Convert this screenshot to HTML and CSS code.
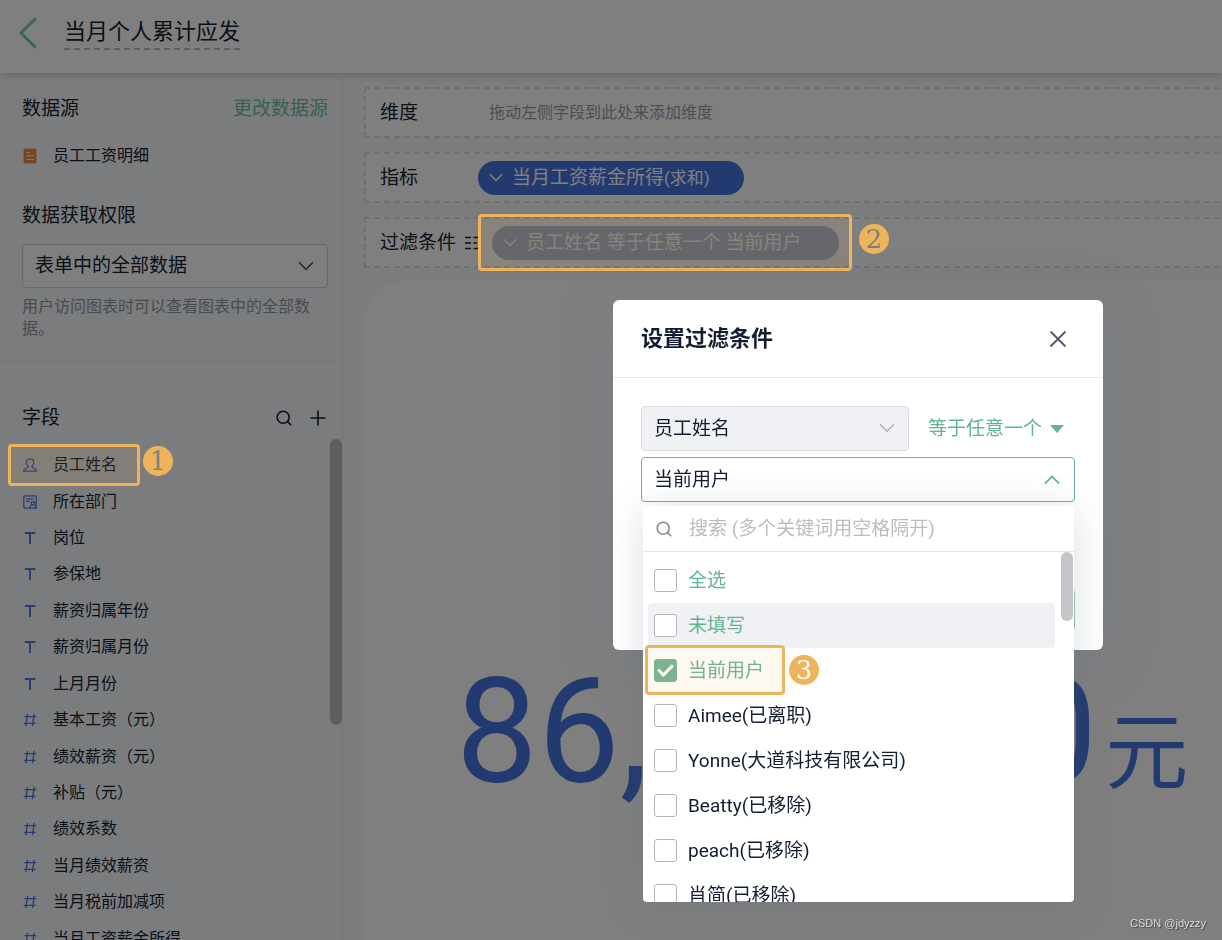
FILE: index.html
```html
<!DOCTYPE html>
<html lang="zh-CN">
<head>
<meta charset="utf-8">
<meta name="viewport" content="width=device-width, initial-scale=1">
<title>当月个人累计应发</title>
<link rel="stylesheet" href="styles.css">
</head>
<body>
<svg class="sprite" aria-hidden="true">
  <symbol id="i-text" viewBox="0 0 14 14"><path d="M1.800 2h10.400M7 2V13" stroke-width="1.900"/></symbol>
  <symbol id="i-num" viewBox="0 0 14 14"><path d="M1.400 3.600H13.400M.6 10.400H12.600M4.600.8 2.800 13.200M11.200.8 9.400 13.200" stroke-width="1.300"/></symbol>
  <symbol id="i-down" viewBox="0 0 16 10"><path d="M1 1.200 8 8.400 15 1.200"/></symbol>
  <symbol id="i-search" viewBox="0 0 16 16"><circle cx="7.200" cy="7.200" r="6"/><path d="M11.600 11.600 15.200 15.200"/></symbol>
</svg>

<div class="page">
  <header class="topbar">
    <button class="back" type="button" aria-label="返回"><svg viewBox="0 0 20 32"><path d="M17 2 3 16 17 30"/></svg></button>
    <h1 class="title">当月个人累计应发</h1>
  </header>

  <div class="workspace">
    <aside class="sidebar">
      <section class="source">
        <div class="section-head">
          <h2>数据源</h2>
          <a class="link" href="#source">更改数据源</a>
        </div>
        <p class="source-name">
          <svg class="form-icon" viewBox="0 0 14 15"><rect x="1" y=".5" width="12" height="14" rx="1.200"/><path d="M3.400 4.200h3.400M3.400 7.400h7.200M3.400 10.800h7.200"/></svg>
          员工工资明细
        </p>
        <h2><label for="scope">数据获取权限</label></h2>
        <div class="select-wrap scope-wrap">
          <select id="scope" class="select"><option>表单中的全部数据</option></select>
          <svg class="chev"><use href="#i-down"/></svg>
        </div>
        <p class="hint">用户访问图表时可以查看图表中的全部数据。</p>
      </section>

      <section class="fields">
        <div class="section-head">
          <h2>字段</h2>
          <div class="tools">
            <button type="button" aria-label="搜索字段"><svg viewBox="0 0 16 16"><use href="#i-search"/></svg></button>
            <button type="button" aria-label="添加字段"><svg viewBox="0 0 16 16"><path d="M8 .5v15M.5 8h15"/></svg></button>
          </div>
        </div>
        <ul class="field-list">
          <li><svg viewBox="0 0 14 14"><path d="M5.200 8.200C3.600 6.800 3.200 5.400 3.200 4.200 3.200 2 4.800.8 7 .8s3.800 1.200 3.800 3.400c0 1.200-.4 2.600-2 4 0 1.600 1.200 2 2.800 2.400 1.200.4 1.800 1.200 1.800 2.600H.6c0-1.400.6-2.200 1.800-2.600 1.600-.4 2.800-.8 2.800-2.400Z" stroke-width="1.200"/></svg>员工姓名<span class="marker marker-field"><b class="badge">1</b></span></li>
          <li><svg viewBox="0 0 14 14"><path d="M5.500 13.200H2.200A1.400 1.400 0 0 1 .8 11.800V2.200A1.400 1.400 0 0 1 2.200.8h9.600a1.400 1.400 0 0 1 1.400 1.400V13.200H6.600c0-1.600.8-2.400 1.800-2.700M3.300 3.800h7.400M3.300 6.400h3.400" stroke-width="1.300"/><path d="M11.400 10.500c1 .3 1.600 1.100 1.600 2.400" stroke-width="1.300"/><circle cx="9.900" cy="8.300" r="1.700" stroke-width="1.300"/></svg>所在部门</li>
          <li><svg><use href="#i-text"/></svg>岗位</li>
          <li><svg><use href="#i-text"/></svg>参保地</li>
          <li><svg><use href="#i-text"/></svg>薪资归属年份</li>
          <li><svg><use href="#i-text"/></svg>薪资归属月份</li>
          <li><svg><use href="#i-text"/></svg>上月月份</li>
          <li><svg><use href="#i-num"/></svg>基本工资（元）</li>
          <li><svg><use href="#i-num"/></svg>绩效薪资（元）</li>
          <li><svg><use href="#i-num"/></svg>补贴（元）</li>
          <li><svg><use href="#i-num"/></svg>绩效系数</li>
          <li><svg><use href="#i-num"/></svg>当月绩效薪资</li>
          <li><svg><use href="#i-num"/></svg>当月税前加减项</li>
          <li><svg><use href="#i-num"/></svg>当月工资薪金所得</li>
        </ul>
        <span class="side-thumb"></span>
      </section>
    </aside>

    <main class="builder">
      <div class="slot">
        <span class="slot-label">维度</span>
        <span class="slot-empty">拖动左侧字段到此处来添加维度</span>
      </div>
      <div class="slot">
        <span class="slot-label">指标</span>
        <button class="pill" type="button"><svg class="chev-sm" viewBox="0 0 16 10"><use href="#i-down"/></svg><span>当月工资薪金所得<small>(求和)</small></span></button>
      </div>
      <div class="slot">
        <span class="slot-label">过滤条件
          <svg class="filter-icon" viewBox="0 0 16 14"><path d="M0 1.500h6M0 7h6M0 12.500h6M8.500 1.500H16M8.500 7H12M8.500 12.500H16M13 4.500l2 2.500-2 2.500"/></svg>
        </span>
        <div class="pill-spot">
          <button class="pill pill-filter" type="button"><svg class="chev-sm" viewBox="0 0 16 10"><use href="#i-down"/></svg><span>员工姓名 等于任意一个 当前用户</span></button>
          <span class="marker marker-pill"><b class="badge">2</b></span>
        </div>
      </div>
      <section class="chart">
        <p class="metric">86,000.00<span class="unit">元</span></p>
      </section>
    </main>
  </div>
</div>

<div class="overlay"></div>

<div class="modal" role="dialog" aria-labelledby="dlg-title">
  <header class="modal-head">
    <h2 id="dlg-title">设置过滤条件</h2>
    <button class="close" type="button" aria-label="关闭"><svg viewBox="0 0 18 18"><path d="M1.500 1.500l15 15M16.500 1.500l-15 15"/></svg></button>
  </header>
  <div class="modal-body">
    <div class="cond-row">
      <div class="select-wrap cond-field">
        <select class="select" aria-label="字段" disabled><option>员工姓名</option></select>
        <svg class="chev"><use href="#i-down"/></svg>
      </div>
      <button class="operator" type="button">等于任意一个<i class="caret"></i></button>
    </div>
    <button class="value" type="button" aria-expanded="true">当前用户<svg class="chev-up" viewBox="0 0 16 10"><path d="M1 8.600 8 1.400 15 8.600"/></svg></button>
    <div class="modal-foot"><button class="ok" type="button" aria-label="确定"></button></div>
  </div>

  <div class="dropdown">
    <label class="search">
      <svg viewBox="0 0 16 16"><use href="#i-search"/></svg>
      <input type="text" placeholder="搜索 (多个关键词用空格隔开)" aria-label="搜索">
    </label>
    <div class="options">
      <label class="option special"><input type="checkbox">全选</label>
      <label class="option special active"><input type="checkbox">未填写</label>
      <label class="option special"><input type="checkbox" checked>当前用户<span class="marker marker-option"><b class="badge">3</b></span></label>
      <label class="option"><input type="checkbox">Aimee(已离职)</label>
      <label class="option"><input type="checkbox">Yonne(大道科技有限公司)</label>
      <label class="option"><input type="checkbox">Beatty(已移除)</label>
      <label class="option"><input type="checkbox">peach(已移除)</label>
      <label class="option"><input type="checkbox">肖简(已移除)</label>
      <span class="thumb"></span>
    </div>
  </div>
</div>

<span class="watermark">CSDN @jdyzzy</span>
</body>
</html>
```
FILE: styles.css
```css
* { box-sizing: border-box; }

body {
  margin: 0;
  height: 100vh;
  overflow: hidden;
  position: relative;
  font: 16px/24px Roboto, "Noto Sans CJK SC", sans-serif;
  color: #141e31;
}

h1, h2, p, ul { margin: 0; padding: 0; font-weight: 400; }
ul { list-style: none; }
h2 { font-size: 19px; line-height: 28px; }

button, select, input { font: inherit; color: inherit; }
button { border: 0; padding: 0; background: none; cursor: pointer; }
svg { display: block; flex: none; fill: none; stroke: currentColor; stroke-width: 1.6; }
.sprite { position: absolute; width: 0; height: 0; }

.page { height: 100%; display: flex; flex-direction: column; background: #f6f8fb; }

/* top bar */
.topbar {
  flex: none;
  height: 73px;
  padding: 0 18px 8px;
  display: flex;
  align-items: center;
  gap: 26px;
  background: #fff;
  box-shadow: 0 2px 8px rgba(60, 70, 60, .25);
}
.back { color: #7cc8aa; }
.back svg { width: 20px; height: 32px; stroke-width: 3; stroke-linecap: round; }
.title {
  font-size: 22px;
  line-height: 32px;
  border-bottom: 2px dashed #c0c0c0;
}

.workspace { flex: 1; min-height: 0; display: flex; }

/* sidebar */
.sidebar {
  flex: none;
  width: 343px;
  display: flex;
  flex-direction: column;
  border-right: 1px solid #e9ebef;
}
.source { padding: 22px 14px 20px 22px; border-bottom: 1px solid #eceef1; }
.section-head { display: flex; justify-content: space-between; align-items: center; }
.link { font-size: 19px; color: #74bd9f; text-decoration: none; }
.source-name { display: flex; align-items: center; gap: 15px; margin: 21px 0 34px; }
.form-icon { width: 16px; height: 16px; stroke: #f4f4f4; stroke-width: 1.1; }
.form-icon rect { fill: #ee8a3c; stroke: none; }
.select-wrap { position: relative; }
.scope-wrap { margin: 14px 0 8px; }
.select {
  display: block;
  width: 100%;
  height: 44px;
  padding: 0 44px 0 12px;
  font-size: 19px;
  color: #141e31;
  background: #fff;
  border: 1px solid #d0d2d7;
  border-radius: 4px;
  appearance: none;
  opacity: 1;
}
.chev { position: absolute; right: 14px; top: 17px; width: 16px; height: 10px; pointer-events: none; color: #50586a; }
.hint { line-height: 22px; padding-right: 14px; color: #9097a2; }

.fields { position: relative; flex: 1; min-height: 0; display: flex; flex-direction: column; padding: 43px 16px 0 22px; }
.tools { display: flex; gap: 18px; }
.tools svg { width: 16px; height: 16px; }
.field-list { flex: 1; margin: 15px 0 -17px; display: grid; grid-auto-rows: minmax(36px, 1fr); }
.field-list li { position: relative; display: flex; align-items: center; gap: 15px; }
.field-list svg { width: 14px; height: 14px; margin: 0 1px; color: #4a7ae0; }
.side-thumb { position: absolute; right: 0; top: 78px; width: 12px; height: 286px; border-radius: 6px; background: #bcbdc0; }

/* builder */
.builder {
  flex: 1;
  min-width: 0;
  display: flex;
  flex-direction: column;
  gap: 14px;
  margin-right: -58px;
  padding: 14px 0 0 21px;
}
.slot {
  flex: none;
  height: 51px;
  display: flex;
  align-items: center;
  padding-left: 14px;
  background: #fff;
  border: 2px dashed #dfe2e2;
}
.slot-label { flex: none; display: flex; align-items: center; gap: 9px; width: 98px; font-size: 19px; white-space: nowrap; }
.slot-empty { padding-left: 11px; color: #9a9da3; }
.filter-icon { width: 16px; height: 14px; }
.pill {
  display: flex;
  align-items: center;
  gap: 9px;
  height: 34px;
  padding: 0 34px 0 11px;
  border-radius: 17px;
  background: #4674e0;
  color: #fff;
  font-size: 19px;
}
.pill small { font-size: 17px; }
.chev-sm { width: 14px; height: 9px; }
.pill-spot { position: relative; padding-left: 14px; }
.pill-filter { padding-right: 38px; background: #b0c0dc; }

.chart {
  flex: 1;
  min-height: 0;
  margin-top: -2px;
  padding-top: 367px;
  background: #fff;
  border-top-left-radius: 44px;
}
.metric { text-align: center; white-space: nowrap; font-size: 146px; line-height: 172px; color: #4674e0; }
.unit { padding-left: 8px; font-size: 83px; line-height: 1; }

.overlay { position: fixed; inset: 0; z-index: 10; background: rgba(0, 0, 0, .5); }

/* numbered callouts */
.marker {
  position: absolute;
  z-index: 20;
  border: 3px solid #edb45c;
  border-radius: 4px;
  background: rgba(237, 180, 92, .09);
  pointer-events: none;
}
.badge {
  position: absolute;
  width: 30px;
  height: 30px;
  border-radius: 50%;
  background: #edb45c;
  color: #7d7e80;
  font: 400 26px/30px "DejaVu Serif", serif;
  text-align: center;
}
.marker-field { left: -14px; top: -3px; width: 132px; height: 42px; }
.marker-field .badge { left: 132px; top: -1px; }
.marker-pill { left: 0; top: -12px; width: 374px; height: 57px; }
.marker-pill .badge { left: 378px; top: 7px; }
.marker-option { left: -3px; top: -3px; width: 140px; height: 50px; }
.marker-option .badge { left: 141px; top: 7px; color: #fff; }

/* dialog */
.modal {
  position: absolute;
  z-index: 30;
  left: 613px;
  top: 300px;
  width: 490px;
  background: #fff;
  border-radius: 6px;
  box-shadow: 0 6px 48px rgba(110, 125, 145, .35);
}
.modal-head {
  height: 78px;
  padding: 0 36px 0 28px;
  display: flex;
  align-items: center;
  justify-content: space-between;
  border-bottom: 1px solid #e9eaed;
}
.modal-head h2 { font-size: 22px; font-weight: 700; }
.close svg { width: 18px; height: 18px; color: #50586a; stroke-width: 1.8; }
.modal-body { padding: 28px 28px 20px; }
.cond-row { display: flex; align-items: center; gap: 19px; margin-bottom: 6px; }
.cond-field { width: 268px; }
.cond-field .select { height: 45px; background: #f0f1f4; border-color: #d9dbe0; }
.cond-field .chev { color: #b4b7bd; }
.operator { display: flex; align-items: center; gap: 8px; font-size: 19px; color: #63b496; }
.caret { border: 7px solid transparent; border-top: 8px solid #63b496; border-bottom: 0; }
.value {
  width: 100%;
  height: 45px;
  padding: 0 14px 0 12px;
  display: flex;
  align-items: center;
  justify-content: space-between;
  font-size: 19px;
  border: 1px solid #63b496;
  border-radius: 4px;
}
.chev-up { width: 16px; height: 10px; color: #63b496; stroke-width: 1.8; }
.modal-foot { display: flex; justify-content: flex-end; margin-top: 88px; }
.ok { width: 80px; height: 40px; border-radius: 3px; background: #8fcab3; }

.dropdown {
  position: absolute;
  left: 30px;
  top: 206px;
  width: 431px;
  background: #fff;
  border-radius: 4px;
  box-shadow: 0 4px 36px rgba(90, 105, 120, .22);
}
.search { display: flex; align-items: center; gap: 17px; height: 46px; padding: 0 13px; border-bottom: 1px solid #e4e5e8; }
.search svg { width: 16px; height: 16px; color: #858a94; }
.search input { flex: 1; min-width: 0; padding: 0; border: 0; outline: 0; background: none; font-size: 19px; }
.search input::placeholder { color: #bbbdc2; opacity: 1; }
.options { position: relative; height: 350px; overflow: hidden; padding: 6px 19px 0 5px; }
.option {
  position: relative;
  display: flex;
  align-items: center;
  gap: 11px;
  height: 45px;
  padding-left: 6px;
  border-radius: 4px;
  font-size: 19px;
}
.option input {
  flex: none;
  display: grid;
  justify-content: center;
  align-content: start;
  appearance: none;
  width: 23px;
  height: 23px;
  margin: 0;
  border: 1px solid #b4b6bc;
  border-radius: 3px;
  background: #fff;
}
.option input:checked { border-color: #74b498; background: #74b498; }
.option input:checked::after {
  content: "";
  box-sizing: border-box;
  width: 15px;
  height: 9px;
  margin-top: 4px;
  border-left: 3px solid #fff;
  border-bottom: 3px solid #fff;
  transform: rotate(-45deg);
}
.special { color: #63b496; }
.active { background: #f0f1f4; }
.thumb { position: absolute; right: 1px; top: 0; width: 12px; height: 69px; border-radius: 6px; background: #c4c5c9; }

.watermark {
  position: absolute;
  z-index: 40;
  right: 16px;
  bottom: 7px;
  font: 11px/20px "Liberation Sans", sans-serif;
  color: #dcdcdc;
  text-shadow: 1px 1px 1px #444;
}
```
